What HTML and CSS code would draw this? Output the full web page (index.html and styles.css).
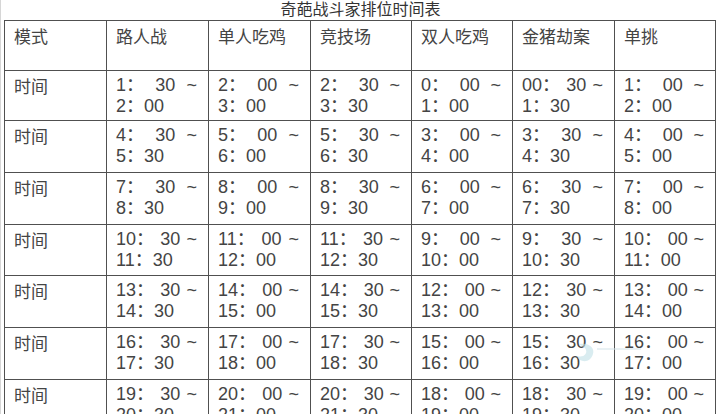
FILE: index.html
```html
<!DOCTYPE html>
<html lang="zh-CN">
<head>
<meta charset="utf-8">
<title>奇葩战斗家排位时间表</title>
<link rel="stylesheet" href="styles.css">
</head>
<body>
<div class="page">
  <div class="title">奇葩战斗家排位时间表</div>
  <table class="sched">
    <colgroup>
      <col class="c102"><col class="c102"><col class="c102"><col class="c101"><col class="c101"><col class="c102"><col class="c101">
    </colgroup>
    <tr class="head">
      <td>模式</td><td>路人战</td><td>单人吃鸡</td><td>竞技场</td><td>双人吃鸡</td><td>金猪劫案</td><td>单挑</td>
    </tr>
    <tr class="r1">
      <td>时间</td>
      <td><div class="l1"><span>1：</span><span>30</span><span>~</span></div><div>2：00</div></td>
      <td><div class="l1"><span>2：</span><span>00</span><span>~</span></div><div>3：00</div></td>
      <td><div class="l1"><span>2：</span><span>30</span><span>~</span></div><div>3：30</div></td>
      <td><div class="l1"><span>0：</span><span>00</span><span>~</span></div><div>1：00</div></td>
      <td><div class="l1"><span>00：</span><span>30</span><span>~</span></div><div>1：30</div></td>
      <td><div class="l1"><span>1：</span><span>00</span><span>~</span></div><div>2：00</div></td>
    </tr>
    <tr>
      <td>时间</td>
      <td><div class="l1"><span>4：</span><span>30</span><span>~</span></div><div>5：30</div></td>
      <td><div class="l1"><span>5：</span><span>00</span><span>~</span></div><div>6：00</div></td>
      <td><div class="l1"><span>5：</span><span>30</span><span>~</span></div><div>6：30</div></td>
      <td><div class="l1"><span>3：</span><span>00</span><span>~</span></div><div>4：00</div></td>
      <td><div class="l1"><span>3：</span><span>30</span><span>~</span></div><div>4：30</div></td>
      <td><div class="l1"><span>4：</span><span>00</span><span>~</span></div><div>5：00</div></td>
    </tr>
    <tr>
      <td>时间</td>
      <td><div class="l1"><span>7：</span><span>30</span><span>~</span></div><div>8：30</div></td>
      <td><div class="l1"><span>8：</span><span>00</span><span>~</span></div><div>9：00</div></td>
      <td><div class="l1"><span>8：</span><span>30</span><span>~</span></div><div>9：30</div></td>
      <td><div class="l1"><span>6：</span><span>00</span><span>~</span></div><div>7：00</div></td>
      <td><div class="l1"><span>6：</span><span>30</span><span>~</span></div><div>7：30</div></td>
      <td><div class="l1"><span>7：</span><span>00</span><span>~</span></div><div>8：00</div></td>
    </tr>
    <tr>
      <td>时间</td>
      <td><div class="l1"><span>10：</span><span>30</span><span>~</span></div><div>11：30</div></td>
      <td><div class="l1"><span>11：</span><span>00</span><span>~</span></div><div>12：00</div></td>
      <td><div class="l1"><span>11：</span><span>30</span><span>~</span></div><div>12：30</div></td>
      <td><div class="l1"><span>9：</span><span>00</span><span>~</span></div><div>10：00</div></td>
      <td><div class="l1"><span>9：</span><span>30</span><span>~</span></div><div>10：30</div></td>
      <td><div class="l1"><span>10：</span><span>00</span><span>~</span></div><div>11：00</div></td>
    </tr>
    <tr>
      <td>时间</td>
      <td><div class="l1"><span>13：</span><span>30</span><span>~</span></div><div>14：30</div></td>
      <td><div class="l1"><span>14：</span><span>00</span><span>~</span></div><div>15：00</div></td>
      <td><div class="l1"><span>14：</span><span>30</span><span>~</span></div><div>15：30</div></td>
      <td><div class="l1"><span>12：</span><span>00</span><span>~</span></div><div>13：00</div></td>
      <td><div class="l1"><span>12：</span><span>30</span><span>~</span></div><div>13：30</div></td>
      <td><div class="l1"><span>13：</span><span>00</span><span>~</span></div><div>14：00</div></td>
    </tr>
    <tr>
      <td>时间</td>
      <td><div class="l1"><span>16：</span><span>30</span><span>~</span></div><div>17：30</div></td>
      <td><div class="l1"><span>17：</span><span>00</span><span>~</span></div><div>18：00</div></td>
      <td><div class="l1"><span>17：</span><span>30</span><span>~</span></div><div>18：30</div></td>
      <td><div class="l1"><span>15：</span><span>00</span><span>~</span></div><div>16：00</div></td>
      <td class="wm-cell"><div class="l1"><span>15：</span><span>30</span><span>~</span></div><div>16：30</div>
        <svg class="wm" width="70" height="22" viewBox="0 0 70 22"><path d="M4 2 C16 0 22 8 16 16 C12 21 4 20 2 14 C8 16 14 12 10 6 Z" fill="#bfe0e6" opacity="0.6"/><rect x="22" y="6" width="44" height="2" fill="#d4e4ea" opacity="0.5"/></svg>
      </td>
      <td><div class="l1"><span>16：</span><span>00</span><span>~</span></div><div>17：00</div></td>
    </tr>
    <tr>
      <td>时间</td>
      <td><div class="l1"><span>19：</span><span>30</span><span>~</span></div><div>20：30</div></td>
      <td><div class="l1"><span>20：</span><span>00</span><span>~</span></div><div>21：00</div></td>
      <td><div class="l1"><span>20：</span><span>30</span><span>~</span></div><div>21：30</div></td>
      <td><div class="l1"><span>18：</span><span>00</span><span>~</span></div><div>19：00</div></td>
      <td><div class="l1"><span>18：</span><span>30</span><span>~</span></div><div>19：30</div></td>
      <td><div class="l1"><span>19：</span><span>00</span><span>~</span></div><div>20：00</div></td>
    </tr>
  </table>
</div>
</body>
</html>
```

FILE: styles.css
```css
html, body {
  margin: 0;
  padding: 0;
  background: #ffffff;
  overflow: hidden;
}

.page {
  width: 720px;
  height: 416px;
  box-sizing: border-box;
  padding: 0 4px;
  border-left: 1px solid #d6d6d6;
  font-family: "Liberation Sans", "Noto Sans CJK SC", sans-serif;
  color: #444;
}

.title {
  margin-top: -2px;
  height: 22px;
  line-height: 20px;
  font-size: 16px;
  text-align: center;
  color: #333;
  font-family: "Noto Sans CJK SC", sans-serif;
}

.sched {
  border-collapse: collapse;
  table-layout: fixed;
  width: 711px;
  margin-left: -1px;
  font-size: 18px;
  line-height: 21px;
}

.c102 { width: 102px; }
.c101 { width: 101px; }

.sched td {
  border: 1px solid #505050;
  padding: 4px 11px 0 9px;
  vertical-align: top;
  height: 51.8px;
  box-sizing: border-box;
  white-space: nowrap;
}

.sched .head td,
.sched .r1 td {
  height: 50px;
}

.sched tr td:first-child,
.sched .head td {
  font-family: "Noto Sans CJK SC", sans-serif;
  font-size: 17px;
}

.l1 {
  display: flex;
  justify-content: space-between;
}

.wm-cell {
  position: relative;
}

.wm {
  position: absolute;
  left: 62px;
  top: 14px;
}
```
